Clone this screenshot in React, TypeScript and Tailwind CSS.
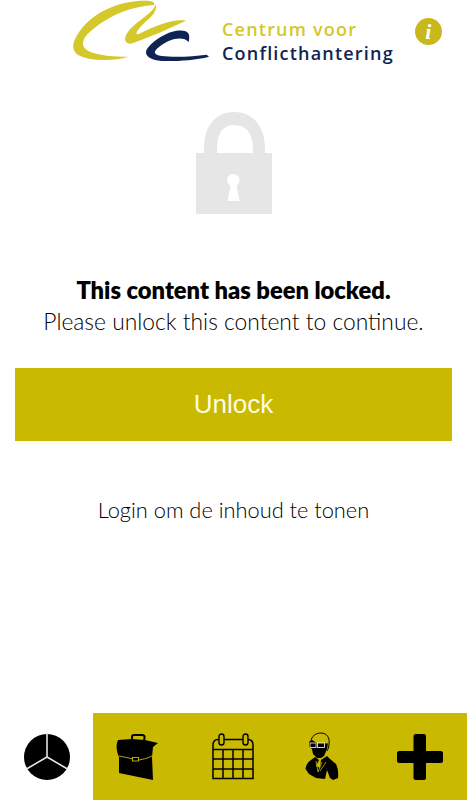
import React from "react";

function Logo() {
  return (
    <svg width="140" height="66" viewBox="36 0 420 198" className="shrink-0">
      <path fill="#d4c82a" d="M270 3C200 -2 110 25 60 92C25 140 35 168 90 177C130 182 175 180 205 170C165 170 112 167 84 152C62 140 62 118 96 90C150 44 220 18 282 15C285 10 280 4 270 3Z" />
      <path fill="#d4c82a" d="M286 8C292 30 238 58 210 88C190 110 190 132 212 131C270 112 330 84 378 62C340 56 290 76 236 102C226 106 228 94 244 78C264 56 296 40 286 8Z" />
      <path fill="#0f2452" d="M386 126C392 100 385 88 350 92C310 98 262 135 258 155C256 172 280 183 320 183C365 183 410 180 447 170L440 164C400 170 340 172 305 168C280 164 278 155 298 140C325 118 368 105 386 126Z" />
    </svg>
  );
}

function Lock() {
  return (
    <svg width="76" height="104" viewBox="0 0 76 104">
      <path fill="#e6e6e6" fillRule="evenodd" d="M8 42V38C8 14 20 1 38 1C56 1 69 14 69 38V42H76V103H0V42ZM21 42H57V38C57 22 50 14 38 14C27 14 21 22 21 38Z" />
      <path fill="#ffffff" d="M37 63C33 63 31 66 31 69C31 71.500 32.500 73.500 34.500 74.500L31.500 90H43.500L40.500 74.500C42.500 73.500 43.500 71.500 43.500 69C43.500 66 41 63 37 63Z" />
    </svg>
  );
}

function Pie() {
  return (
    <svg width="48" height="48" viewBox="0 0 48 48">
      <circle cx="24" cy="24" r="23" fill="#000" />
      <path stroke="#e4e4e4" strokeWidth="1.6" fill="none" d="M24 24V0M24 24L3.500 36M24 24L44.500 36" />
    </svg>
  );
}

function Briefcase() {
  return (
    <svg width="44" height="48" viewBox="0 0 44 48" className="mr-1.5">
      <path fill="none" stroke="#000" strokeWidth="2" d="M17 8V4C17 3 18 2 19 2H27C29 2 30 3 29.500 5L29 8" />
      <path fill="#000" d="M3 7L17 6L30 7L43 10L38 14L37 24L38 47L4 40L4 24C2 20 1 14 2 10Z" />
      <path fill="none" stroke="#c9b900" strokeWidth="0.9" d="M4 23C9 24 14 25 17.500 26M23.500 27C28 26.500 33 25 37 23" />
      <rect x="17.500" y="24.500" width="6" height="3.500" fill="none" stroke="#c9b900" strokeWidth="0.9" />
    </svg>
  );
}

function Calendar() {
  return (
    <svg width="42" height="47" viewBox="0 0 42 47">
      <path fill="none" stroke="#000" strokeWidth="1.5" d="M1 12.500C1 7.500 3 6.500 6 6.500H36C39.500 6.500 41 8 41 12V45.500H1ZM1 16.500H41M1 26H41M1 36H41M11 16.500V45.500M21 16.500V45.500M31 16.500V45.500" />
      <rect x="7" y="1" width="5" height="11" rx="2.500" fill="#c9b900" stroke="#000" strokeWidth="1.4" />
      <rect x="31" y="1" width="5" height="11" rx="2.500" fill="#c9b900" stroke="#000" strokeWidth="1.4" />
    </svg>
  );
}

function Person() {
  return (
    <svg width="34" height="49" viewBox="0 0 34 49" className="mr-2.5">
      <path fill="none" stroke="#000" strokeWidth="1" d="M6 10C6 4 11 1 16 1C22 1 25 6 24 12C24 15 23 17 22 19" />
      <path fill="#000" d="M7 8L12 11L23 11.500L22 17L19 24L16 26H12L8 22L7 17L4 15L4 10Z" />
      <path fill="#000" d="M10 25L14 28L11 34L15 36L16 28L22 24L25 27L31 32C33 36 33.500 41 33 46L28 48L25 46L22 38L20 47L11 46L4 42L0.500 37C1 33 3 30 6 28Z" />
      <rect x="5" y="11" width="6" height="4.500" fill="#000" stroke="#fff" strokeWidth="0.8" />
      <rect x="12.500" y="11" width="7" height="4.500" fill="#000" stroke="#fff" strokeWidth="0.8" />
      <path stroke="#c9b900" strokeWidth="0.8" fill="none" d="M11 29L13 40L17 30M21 30L15 39" />
    </svg>
  );
}

function Plus() {
  return (
    <svg width="46" height="46" viewBox="0 0 46 46">
      <path fill="#000" d="M18.500 0H27C28 0 29 1 29 2V17H44C45 17 46 18 46 19V27C46 28 45 29 44 29H29V44C29 45 28 46 27 46H18.500C17.500 46 16.500 45 16.500 44V29H2C1 29 0 28 0 27V19C0 18 1 17 2 17H16.500V2C16.500 1 17.500 0 18.500 0Z" />
    </svg>
  );
}

export default function App() {
  return (
    <div className="flex h-[800px] w-[467px] flex-col overflow-hidden bg-white font-['Lato','Noto_Sans',sans-serif] text-black">
      <header className="flex h-[111px] shrink-0 items-start pl-[72px]">
        <Logo />
        <div className="mt-[17px] ml-[10px] flex flex-col font-['Open_Sans',sans-serif] text-[18px] leading-[24px] font-semibold tracking-[1.2px]">
          <span className="text-[#d4c82a]">Centrum voor</span>
          <span className="text-[#0f2452]">Conflicthantering</span>
        </div>
        <div className="mt-[18px] ml-[21px] flex h-[27px] w-[27px] items-center justify-center rounded-full bg-[#c9b81c] font-['Liberation_Serif',serif] text-[22px] leading-none font-bold text-white italic">
          i
        </div>
      </header>
      <main className="flex flex-1 flex-col items-center">
        <Lock />
        <h1 className="mt-[61px] text-[23.700px] leading-[28px] font-extrabold">This content has been locked.</h1>
        <p className="mt-[3px] text-[22.800px] leading-[28px] font-light">Please unlock this content to continue.</p>
        <button className="mt-[33px] h-[73px] w-[437px] bg-[#c9b900] font-['Liberation_Sans',sans-serif] text-[26px] text-[#fffde0]">
          Unlock
        </button>
        <p className="mt-[56px] text-[21.800px] leading-[26px] font-light">Login om de inhoud te tonen</p>
      </main>
      <nav className="flex h-[87px] shrink-0 bg-[#c9b900]">
        <div className="flex w-[93px] items-center justify-center bg-white pt-[1px]"><Pie /></div>
        <div className="flex flex-1 items-center justify-center"><Briefcase /></div>
        <div className="flex flex-1 items-center justify-center"><Calendar /></div>
        <div className="flex flex-1 items-center justify-center"><Person /></div>
        <div className="flex flex-1 items-center justify-center"><Plus /></div>
      </nav>
    </div>
  );
}
